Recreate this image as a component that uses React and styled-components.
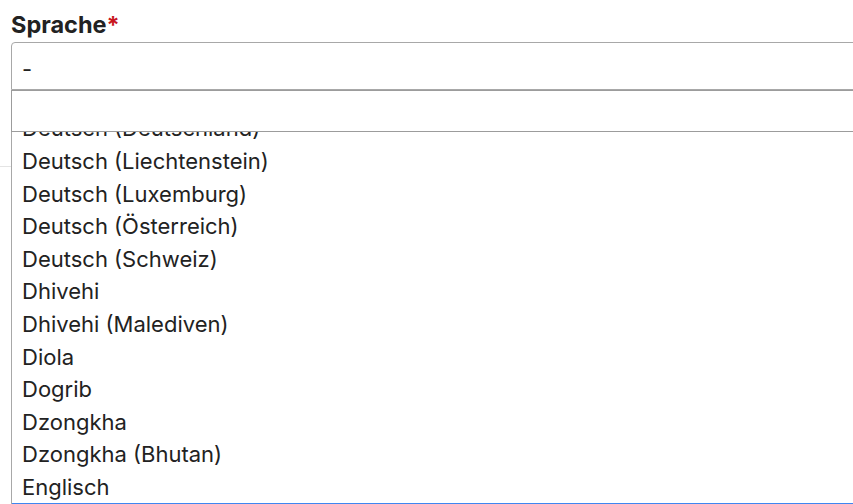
import styled, { createGlobalStyle } from "styled-components";
import { useLayoutEffect, useRef } from "react";

const GlobalStyle = createGlobalStyle`
  html, body {
    margin: 0;
    padding: 0;
    background: #ffffff;
    overflow: hidden;
  }
  body {
    font-family: Inter, "Liberation Sans", Arial, sans-serif;
    color: #222222;
  }
`;

const Page = styled.div`
  padding: 10px 0 0 11px;
  width: 900px;
  height: 504px;
  box-sizing: border-box;
`;

const Field = styled.div`
  display: flex;
  flex-direction: column;
`;

const Label = styled.label`
  font-size: 23.5px;
  font-weight: 700;
  line-height: 29px;
  color: #222222;
  margin-bottom: 3px;

  & .req {
    color: #c8161d;
  }
`;

const SelectWrap = styled.div`
  position: relative;
`;

const SelectBox = styled.div`
  height: 48px;
  box-sizing: border-box;
  border: 1px solid #a8a8a8;
  border-radius: 4px 0 0 0;
  display: flex;
  align-items: center;
  padding: 5px 10px 0;
  font-size: 22px;
  color: #222222;
`;

const Divider = styled.div`
  margin-top: 76px;
  margin-left: -11px;
  height: 1px;
  background: #e4e4e4;
`;

const Dropdown = styled.div`
  position: absolute;
  top: 48px;
  left: 0;
  right: 0;
  background: #ffffff;
  border-left: 1px solid #a8a8a8;
`;

const Search = styled.input`
  display: block;
  width: 100%;
  height: 42px;
  box-sizing: border-box;
  margin: 0 0 0 -1px;
  border: 1px solid #9c9c9c;
  outline: none;
  font: inherit;
  font-size: 22px;
  padding: 0 10px;
  background: #ffffff;
`;

const List = styled.ul`
  list-style: none;
  margin: 0;
  padding: 0;
  height: 373px;
  overflow: hidden;
`;

const Option = styled.li`
  height: 32.6px;
  display: flex;
  align-items: center;
  padding: 0 10px;
  font-size: 22px;
  color: ${(p) => (p.$active ? "#ffffff" : "#222222")};
  background: ${(p) => (p.$active ? "#3f86f0" : "transparent")};
  white-space: nowrap;
`;

const languages = [
  "Deutsch",
  "Deutsch (Belgien)",
  "Deutsch (Deutschland)",
  "Deutsch (Liechtenstein)",
  "Deutsch (Luxemburg)",
  "Deutsch (Österreich)",
  "Deutsch (Schweiz)",
  "Dhivehi",
  "Dhivehi (Malediven)",
  "Diola",
  "Dogrib",
  "Dzongkha",
  "Dzongkha (Bhutan)",
  "Englisch",
  "Englisch (Amerikanisch-Samoa)",
  "Englisch (Anguilla)",
];

const ACTIVE = "Englisch (Amerikanisch-Samoa)";

export default function App() {
  const listRef = useRef(null);

  useLayoutEffect(() => {
    // keep "Deutsch (Deutschland)" partly hidden under the search field
    if (listRef.current) listRef.current.scrollTop = 2 * 32.6 + 20;
  }, []);

  return (
    <Page>
      <GlobalStyle />
      <Field>
        <Label>
          Sprache<span className="req">*</span>
        </Label>
        <SelectWrap>
          <SelectBox>-</SelectBox>
          <Divider />
          <Dropdown>
            <Search type="text" aria-label="Suche" />
            <List ref={listRef}>
              {languages.map((lang) => (
                <Option key={lang} $active={lang === ACTIVE}>
                  {lang}
                </Option>
              ))}
            </List>
          </Dropdown>
        </SelectWrap>
      </Field>
    </Page>
  );
}
